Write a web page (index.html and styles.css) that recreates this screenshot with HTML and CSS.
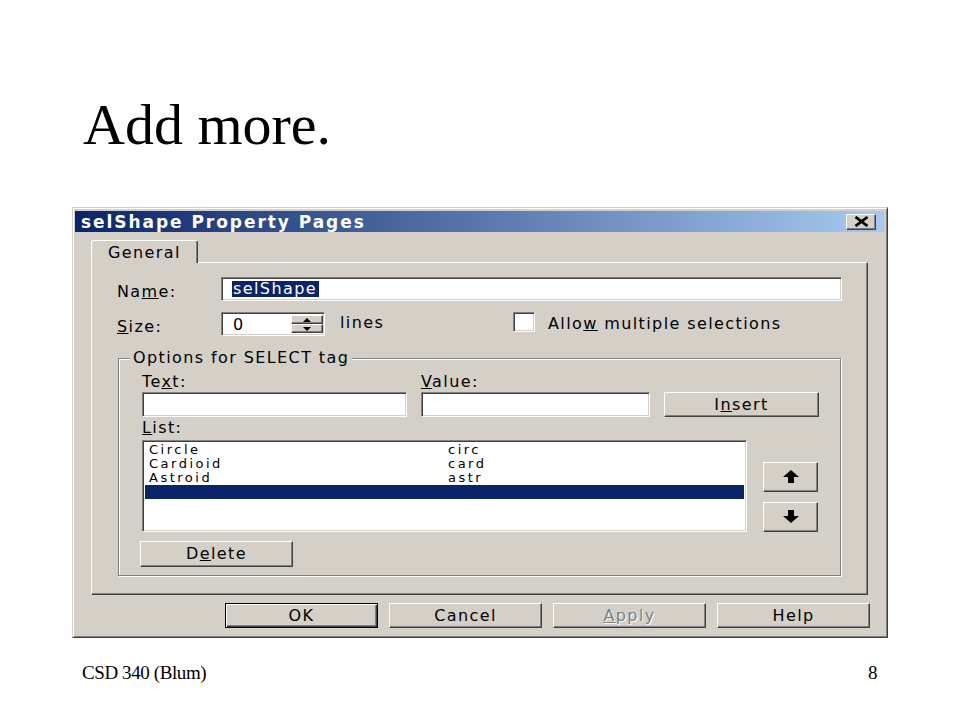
FILE: index.html
```html
<!DOCTYPE html>
<html>
<head>
<meta charset="utf-8">
<title>Add more.</title>
<link rel="stylesheet" href="styles.css">
</head>
<body>
<div class="slide">
  <h1 class="title">Add more.</h1>
  <div class="dialog">
    <div class="titlebar">
      <span class="caption">selShape Property Pages</span>
      <span class="close"><svg width="15" height="11" viewBox="0 0 15 11"><path d="M1.5 1 L13.5 10 M13.5 1 L1.5 10" stroke="#000" stroke-width="2.8" fill="none"/></svg></span>
    </div>
    <div class="body">
      <div class="tabs"><div class="tab">General</div></div>
      <div class="panel">
        <div class="row">
          <span class="lbl rowlbl">Na<u>m</u>e:</span>
          <div class="field name-field"><span class="sel">selShape</span></div>
        </div>
        <div class="row size-row">
          <span class="lbl rowlbl"><u>S</u>ize:</span>
          <div class="field spin">
            <span class="spin-val">0</span>
            <span class="spin-btns">
              <span class="sbtn"><span class="tri-up"></span></span>
              <span class="sbtn"><span class="tri-down"></span></span>
            </span>
          </div>
          <span class="lbl lines">lines</span>
          <span class="check"></span>
          <span class="lbl">Allo<u>w</u> multiple selections</span>
        </div>
        <div class="group">
          <span class="lbl legend">Options for SELECT tag</span>
          <div class="grid-top">
            <span class="lbl">Te<u>x</u>t:</span>
            <span class="lbl"><u>V</u>alue:</span>
            <span></span>
            <div class="field"></div>
            <div class="field"></div>
            <span class="btn">I<u>n</u>sert</span>
          </div>
          <span class="lbl list-lbl"><u>L</u>ist:</span>
          <div class="list-row">
            <div class="field listbox">
              <div class="item"><span>Circle</span><span>circ</span></div>
              <div class="item"><span>Cardioid</span><span>card</span></div>
              <div class="item"><span>Astroid</span><span>astr</span></div>
              <div class="item selected"><span></span><span></span></div>
            </div>
            <div class="arrows">
              <span class="btn arrow"><svg width="16" height="14" viewBox="0 0 16 14"><polygon points="8,0 16,7 11,7 11,13 5,13 5,7 0,7" fill="#000"/></svg></span>
              <span class="btn arrow"><svg width="16" height="14" viewBox="0 0 16 14"><polygon points="5,0 11,0 11,6 16,6 8,13 0,6 5,6" fill="#000"/></svg></span>
            </div>
          </div>
          <span class="btn delete">D<u>e</u>lete</span>
        </div>
      </div>
      <div class="buttons">
        <span class="btn default">OK</span>
        <span class="btn">Cancel</span>
        <span class="btn disabled"><u>A</u>pply</span>
        <span class="btn">Help</span>
      </div>
    </div>
  </div>
  <div class="footer"><span>CSD 340 (Blum)</span><span>8</span></div>
</div>
</body>
</html>
```
FILE: styles.css
```css
* { box-sizing: border-box; }
html, body { margin: 0; padding: 0; background: #fff; }

.slide {
  width: 960px;
  height: 720px;
  padding-left: 72px;
  display: flex;
  flex-direction: column;
  overflow: hidden;
}

.title {
  font: 400 58px/64px "Liberation Serif", "Times New Roman", serif;
  color: #000;
  margin: 93px 0 0 11px;
}

.dialog {
  margin-top: 50px;
  width: 816px;
  height: 431px;
  background: #d4d0c8;
  border: 1px solid;
  border-color: #d4d0c8 #404040 #404040 #d4d0c8;
  box-shadow: inset 1px 1px 0 #fff, inset -1px -1px 0 #808080;
  padding: 3px 3px 3px 2px;
  display: flex;
  flex-direction: column;
  font-family: "DejaVu Sans", Verdana, sans-serif;
  font-size: 16px;
  line-height: 16px;
  letter-spacing: 1.4px;
  color: #000;
}

.titlebar {
  height: 21px;
  flex: none;
  background: linear-gradient(to right, #0a246a, #a6caf0);
  display: flex;
  align-items: center;
  justify-content: space-between;
  padding: 0 8px 0 6px;
}

.caption {
  color: #fff;
  font-weight: 700;
  font-size: 17px;
  letter-spacing: 1.95px;
}

.close {
  width: 30px;
  height: 16px;
  background: #d4d0c8;
  border: 1px solid;
  border-color: #fff #404040 #404040 #fff;
  box-shadow: inset -1px -1px 0 #808080;
  display: flex;
  align-items: center;
  justify-content: center;
}

.body {
  flex: 1;
  padding: 8px 16px 0 16px;
  display: flex;
  flex-direction: column;
}

.tabs {
  height: 22px;
  display: flex;
  flex: none;
}

.tab {
  position: relative;
  z-index: 1;
  width: 107px;
  height: 23px;
  background: #d4d0c8;
  border: 1px solid;
  border-bottom: none;
  border-color: #fff #404040 #d4d0c8 #fff;
  border-radius: 3px 3px 0 0;
  box-shadow: inset -1px 0 0 #808080;
  padding: 4px 0 0 16px;
}

.panel {
  width: 777px;
  height: 333px;
  flex: none;
  border: 1px solid;
  border-color: #fff #404040 #404040 #fff;
  box-shadow: inset -1px -1px 0 #808080;
  padding: 14px 25px 0 25px;
  display: flex;
  flex-direction: column;
}

.row {
  display: flex;
  align-items: center;
  height: 24px;
}

.size-row { margin-top: 11px; }

.rowlbl {
  width: 104px;
  flex: none;
  padding-top: 5px;
}

.lbl { white-space: nowrap; }

.field {
  background: #fff;
  border: 1px solid;
  border-color: #808080 #fff #fff #808080;
  box-shadow: inset 1px 1px 0 #404040, inset -1px -1px 0 #d4d0c8;
}

.name-field {
  flex: 1;
  height: 24px;
  display: flex;
  align-items: center;
  padding-left: 10px;
}

.sel {
  background: #0a246a;
  color: #fff;
  padding: 0 2px 1px 1px;
  line-height: 15px;
}

.spin {
  width: 104px;
  height: 24px;
  flex: none;
  display: flex;
  padding: 2px 1px 2px 2px;
}

.spin-val {
  flex: 1;
  padding: 2px 0 0 9px;
}

.spin-btns {
  width: 32px;
  display: flex;
  flex-direction: column;
}

.sbtn {
  flex: 1;
  background: #d4d0c8;
  border: 1px solid;
  border-color: #fff #404040 #404040 #fff;
  box-shadow: inset -1px -1px 0 #808080;
  display: flex;
  align-items: center;
  justify-content: center;
}

.tri-up, .tri-down {
  width: 0;
  height: 0;
  border-left: 4px solid transparent;
  border-right: 4px solid transparent;
}
.tri-up { border-bottom: 4px solid #000; }
.tri-down { border-top: 4px solid #000; }

.lines {
  width: 188px;
  flex: none;
  padding: 0 0 2px 15px;
}

.check {
  width: 22px;
  height: 20px;
  flex: none;
  background: #fff;
  border: 1px solid;
  border-color: #808080 #fff #fff #808080;
  box-shadow: inset 1px 1px 0 #404040, inset -1px -1px 0 #d4d0c8;
  margin: 0 13px 4px 0;
}

.group {
  position: relative;
  margin: 22px 1px 0 1px;
  border: 1px solid #808080;
  box-shadow: inset 1px 1px 0 #fff, 1px 1px 0 #fff;
  padding: 15px 0 8px 23px;
  display: flex;
  flex-direction: column;
}

.legend {
  position: absolute;
  left: 11px;
  top: -9px;
  background: #d4d0c8;
  padding: 0 3px;
}

.grid-top {
  display: grid;
  grid-template-columns: 265px 229px 155px;
  grid-template-rows: 16px 25px;
  column-gap: 14px;
  row-gap: 2px;
}

.btn {
  background: #d4d0c8;
  border: 1px solid;
  border-color: #fff #404040 #404040 #fff;
  box-shadow: inset -1px -1px 0 #808080;
  display: flex;
  align-items: center;
  justify-content: center;
  white-space: nowrap;
}

.list-lbl { margin-top: 3px; }

.list-row {
  margin-top: 4px;
  display: flex;
  gap: 16px;
}

.listbox {
  width: 605px;
  height: 92px;
  padding: 2px;
  font-size: 13px;
  letter-spacing: 2.5px;
  line-height: 14px;
}

.item {
  display: grid;
  grid-template-columns: 299px 1fr;
  height: 14px;
  padding-left: 4px;
}

.item.selected { background: #0a246a; }

.arrows {
  display: flex;
  flex-direction: column;
  justify-content: flex-end;
  gap: 10px;
}

.arrow {
  width: 55px;
  height: 30px;
}

.delete {
  margin: 9px 0 0 -2px;
  width: 153px;
  height: 26px;
  align-self: flex-start;
}

.buttons {
  display: flex;
  justify-content: flex-end;
  gap: 11px;
  margin: 8px -2px 0 0;
}

.buttons .btn {
  width: 153px;
  height: 25px;
}

.buttons .default {
  border: 1px solid #000;
  box-shadow: inset 1px 1px 0 #fff, inset -1px -1px 0 #404040, inset -2px -2px 0 #808080;
}

.disabled {
  color: #808080;
  text-shadow: 1px 1px 0 #fff;
}

.footer {
  margin-top: 24px;
  padding: 0 83px 0 10px;
  display: flex;
  justify-content: space-between;
  font: 400 19px/22px "Liberation Serif", "Times New Roman", serif;
  letter-spacing: -0.4px;
}
```
